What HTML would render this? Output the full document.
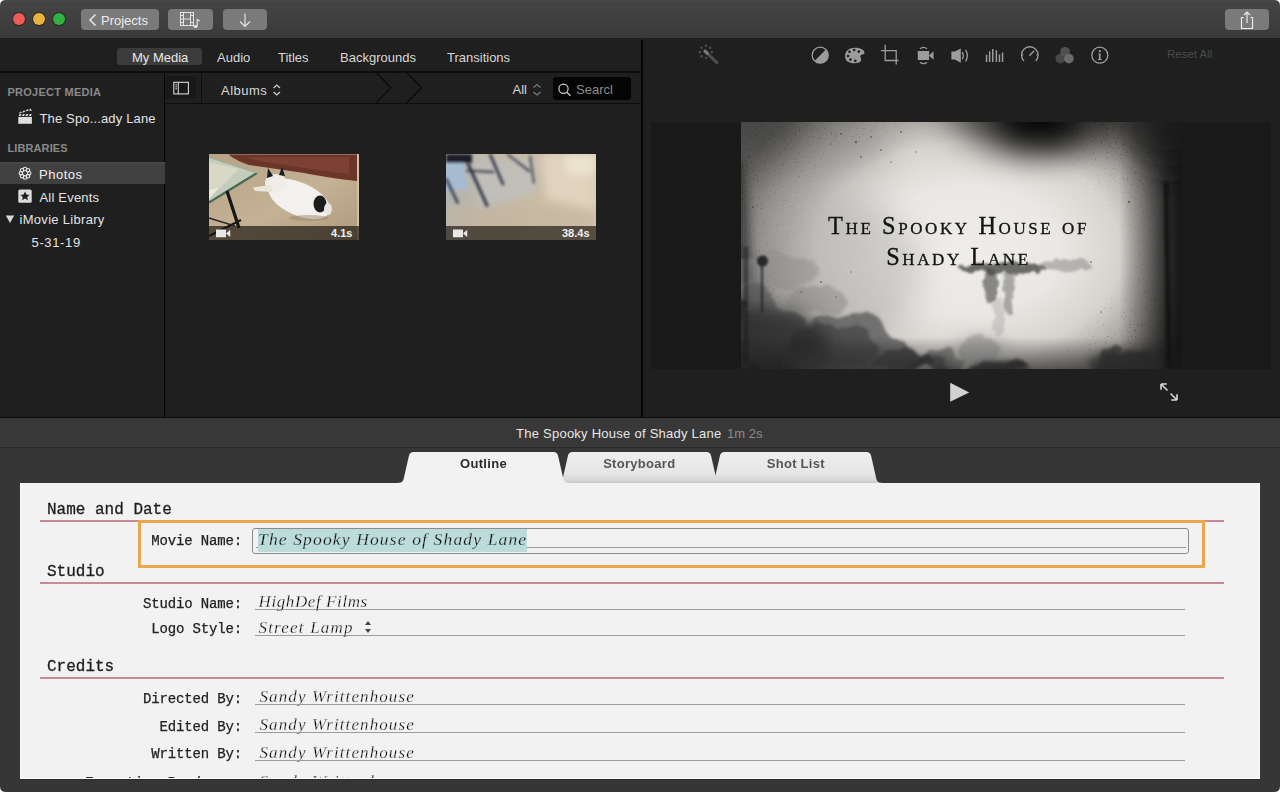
<!DOCTYPE html>
<html><head><meta charset="utf-8"><style>
html,body{margin:0;padding:0;}
body{width:1280px;height:792px;overflow:hidden;position:relative;background:#1f1f1f;font-family:"Liberation Sans", sans-serif;}
.r{position:absolute;}
.t{position:absolute;white-space:nowrap;line-height:1;}
</style></head><body>
<div class="r" style="left:0px;top:0px;width:1280px;height:37.5px;background:linear-gradient(#4a4a4a 0px,#444 3px,#3a3a3a 37px);"></div>
<div class="r" style="left:0px;top:37.5px;width:1280px;height:1px;background:#2a2a2a;"></div>
<div class="r" style="left:12.5px;top:12.5px;width:12px;height:12px;border-radius:50%;background:#ee5b56;box-shadow:0 0 0 0.9px rgba(20,10,10,0.45);"></div>
<div class="r" style="left:32.5px;top:12.5px;width:12px;height:12px;border-radius:50%;background:#e8b33b;box-shadow:0 0 0 0.9px rgba(20,10,10,0.45);"></div>
<div class="r" style="left:52.5px;top:12.5px;width:12px;height:12px;border-radius:50%;background:#2fb143;box-shadow:0 0 0 0.9px rgba(20,10,10,0.45);"></div>
<div class="r" style="left:81px;top:9px;width:78px;height:21px;background:#7a7a7a;border-radius:4px;"></div>
<div class="r" style="left:168px;top:9px;width:45px;height:21px;background:#7a7a7a;border-radius:4px;"></div>
<div class="r" style="left:223px;top:9px;width:44px;height:21px;background:#7a7a7a;border-radius:4px;"></div>
<div class="r" style="left:1225px;top:9px;width:44px;height:21px;background:#7a7a7a;border-radius:4px;"></div>
<svg class="r" style="left:86px;top:12px" width="14" height="16"><path d="M9.5 2.5 L4 8 L9.5 13.5" stroke="#e6e6e6" stroke-width="1.5" fill="none"/></svg>
<div class="t" style="top:13.69px;font-size:13px;font-family:'Liberation Sans', sans-serif;color:#ececec;left:101px;">Projects</div>
<svg class="r" style="left:176px;top:11px" width="32" height="18">
<rect x="4.5" y="1.5" width="13" height="13" fill="none" stroke="#e3e3e3" stroke-width="1"/>
<line x1="7.5" y1="1.5" x2="7.5" y2="14.5" stroke="#e3e3e3"/>
<line x1="14.5" y1="1.5" x2="14.5" y2="14.5" stroke="#e3e3e3"/>
<line x1="7.5" y1="8" x2="14.5" y2="8" stroke="#e3e3e3"/>
<line x1="4.5" y1="4.5" x2="7.5" y2="4.5" stroke="#e3e3e3"/><line x1="4.5" y1="8" x2="7.5" y2="8" stroke="#e3e3e3"/><line x1="4.5" y1="11.5" x2="7.5" y2="11.5" stroke="#e3e3e3"/>
<line x1="14.5" y1="4.5" x2="17.5" y2="4.5" stroke="#e3e3e3"/><line x1="14.5" y1="11.5" x2="17.5" y2="11.5" stroke="#e3e3e3"/>
<ellipse cx="19.5" cy="15.5" rx="2" ry="1.5" fill="#e3e3e3"/>
<path d="M21.2 15.5 V8.5 L24 10" stroke="#e3e3e3" stroke-width="1.2" fill="none"/>
</svg>
<svg class="r" style="left:236px;top:11px" width="18" height="18"><path d="M9 2.5 V15.5 M4 10.5 L9 15.5 L14 10.5" stroke="#e3e3e3" stroke-width="1.2" fill="none"/></svg>
<svg class="r" style="left:1236px;top:10px" width="22" height="20"><path d="M7.5 7.5 H5.5 V18.5 H16.5 V7.5 H14.5" stroke="#ececec" stroke-width="1.2" fill="none"/><path d="M11 2 V13 M8 5 L11 2 L14 5" stroke="#ececec" stroke-width="1.2" fill="none"/></svg>
<div class="r" style="left:0px;top:38px;width:641px;height:379px;background:#1f1f1f;"></div>
<div class="r" style="left:117px;top:48px;width:85px;height:17px;background:#3c3c3c;border-radius:3px;"></div>
<div class="t" style="top:50.59px;font-size:13px;font-family:'Liberation Sans', sans-serif;color:#e8e8e8;left:132px;">My Media</div>
<div class="t" style="top:50.59px;font-size:13px;font-family:'Liberation Sans', sans-serif;color:#d8d8d8;left:217px;">Audio</div>
<div class="t" style="top:50.59px;font-size:13px;font-family:'Liberation Sans', sans-serif;color:#d8d8d8;left:278px;">Titles</div>
<div class="t" style="top:50.59px;font-size:13px;font-family:'Liberation Sans', sans-serif;color:#d8d8d8;left:340px;">Backgrounds</div>
<div class="t" style="top:50.59px;font-size:13px;font-family:'Liberation Sans', sans-serif;color:#d8d8d8;left:447px;">Transitions</div>
<div class="r" style="left:0px;top:71px;width:641px;height:2px;background:#0d0d0d;"></div>
<div class="r" style="left:163.8px;top:73px;width:1.2px;height:344px;background:#050505;"></div>
<div class="t" style="top:86.89px;font-size:11px;font-family:'Liberation Sans', sans-serif;color:#8a8a8a;font-weight:700;letter-spacing:0.25px;left:7.5px;">PROJECT MEDIA</div>
<div class="t" style="top:111.79px;font-size:13px;font-family:'Liberation Sans', sans-serif;color:#e4e4e4;letter-spacing:0.15px;left:39.5px;">The Spo...ady Lane</div>
<div class="t" style="top:143.19px;font-size:11px;font-family:'Liberation Sans', sans-serif;color:#8a8a8a;font-weight:700;letter-spacing:0.1px;left:7.5px;">LIBRARIES</div>
<div class="r" style="left:0px;top:162px;width:165px;height:22px;background:linear-gradient(#4a4a4a 0px,#454545 1.5px,#404040 3px);"></div>
<div class="t" style="top:168.29px;font-size:13px;font-family:'Liberation Sans', sans-serif;color:#f0f0f0;letter-spacing:0.5px;left:39px;">Photos</div>
<div class="t" style="top:190.99px;font-size:13px;font-family:'Liberation Sans', sans-serif;color:#e4e4e4;letter-spacing:0.2px;left:39.5px;">All Events</div>
<div class="t" style="top:213.49px;font-size:13px;font-family:'Liberation Sans', sans-serif;color:#e4e4e4;letter-spacing:0.3px;left:19.5px;">iMovie Library</div>
<div class="t" style="top:235.99px;font-size:13px;font-family:'Liberation Sans', sans-serif;color:#e4e4e4;letter-spacing:0.65px;left:31.5px;">5-31-19</div>
<div class="r" style="left:166px;top:76px;width:30px;height:23px;background:#191919;border-radius:2px;"></div>
<div class="r" style="left:201px;top:73px;width:1px;height:30px;background:#0d0d0d;"></div>
<div class="r" style="left:165px;top:103px;width:476px;height:1px;background:#0d0d0d;"></div>
<div class="t" style="top:84.19px;font-size:13px;font-family:'Liberation Sans', sans-serif;color:#d8d8d8;letter-spacing:0.5px;left:221px;">Albums</div>
<div class="t" style="top:82.99px;font-size:13px;font-family:'Liberation Sans', sans-serif;color:#d8d8d8;left:512.5px;">All</div>
<div class="r" style="left:553px;top:77px;width:78px;height:23px;background:#050505;border-radius:3px;"></div>
<div class="t" style="top:82.99px;font-size:13px;font-family:'Liberation Sans', sans-serif;color:#8a8a8a;left:576px;">Searcl</div>
<svg class="r" style="left:0;top:100px" width="165" height="150">
<g transform="translate(0,-100)">
<path d="M18.3 116.9 H31.9 V123.8 H18.3 Z" fill="#dedede"/>
<g fill="#dcdcdc">
<path d="M18.6 116 L19.6 114 H21.6 L20.6 116 Z"/><path d="M22 116 L23 114 H25 L24 116 Z"/><path d="M25.4 116 L26.4 114 H28.4 L27.4 116 Z"/><path d="M28.8 116 L29.8 114 H31.8 L30.8 116 Z"/>
<path d="M18.6 113.3 L20.4 111.6 L22.2 112.2 L20.2 113.6 Z" opacity="0.85"/><path d="M22 112.2 L23.8 110.5 L25.6 111.1 L23.6 112.5 Z"/><path d="M25.5 111 L27.3 109.3 L29.1 109.9 L27.1 111.3 Z"/><path d="M29 109.9 L30.6 108.6 L31.8 110.4 L30.4 110.9 Z"/>
</g>
<g fill="none" stroke="#e8e8e8" stroke-width="1.1">
<circle cx="29.20" cy="173.20" r="1.75"/><circle cx="27.97" cy="176.17" r="1.75"/><circle cx="25.00" cy="177.40" r="1.75"/><circle cx="22.03" cy="176.17" r="1.75"/><circle cx="20.80" cy="173.20" r="1.75"/><circle cx="22.03" cy="170.23" r="1.75"/><circle cx="25.00" cy="169.00" r="1.75"/><circle cx="27.97" cy="170.23" r="1.75"/>
</g>
<rect x="18.3" y="189.4" width="13.4" height="13.3" rx="1.5" fill="#dcdcdc"/>
<path d="M25 191.6 L26.4 194.6 L29.6 194.9 L27.2 197 L27.9 200.2 L25 198.5 L22.1 200.2 L22.8 197 L20.4 194.9 L23.6 194.6 Z" fill="#1f1f1f"/>
<path d="M5.8 215.5 H14.2 L10 223 Z" fill="#d8d8d8"/>
</g></svg>
<svg class="r" style="left:172px;top:80px" width="20" height="16"><rect x="1.8" y="2.3" width="14.6" height="11.6" fill="none" stroke="#d8d8d8" stroke-width="1.1"/><path d="M6.3 2.3 V13.9" stroke="#d8d8d8" stroke-width="1.1"/><path d="M3.4 4.8 H5 M3.4 6.8 H5 M3.4 8.8 H5" stroke="#d8d8d8" stroke-width="1"/></svg>
<svg class="r" style="left:0;top:0" width="641" height="110">
<path d="M273.6 88 L276.8 85 L280 88 M273.6 92 L276.8 95 L280 92" fill="none" stroke="#d0d0d0" stroke-width="1.2"/>
<path d="M376 72.5 L391 87.8 L376 103" fill="none" stroke="#0b0b0b" stroke-width="1.3"/>
<path d="M406.5 72.5 L421.5 87.8 L406.5 103" fill="none" stroke="#0b0b0b" stroke-width="1.3"/>
<path d="M533.5 87.5 L537 84.5 L540.5 87.5 M533.5 92 L537 95 L540.5 92" fill="none" stroke="#7a7a7a" stroke-width="1.2"/>
<circle cx="563.5" cy="88.8" r="4.6" fill="none" stroke="#cfcfcf" stroke-width="1.2"/>
<path d="M566.8 92.2 L570.5 95.8" stroke="#cfcfcf" stroke-width="1.3"/>
</svg>
<svg class="r" style="left:209px;top:154px" width="150" height="86" viewBox="0 0 150 86">
<defs>
<linearGradient id="cp1" x1="0" y1="0" x2="1" y2="1"><stop offset="0" stop-color="#b6a285"/><stop offset="0.55" stop-color="#c5b193"/><stop offset="1" stop-color="#ad997c"/></linearGradient>
<filter id="tb1" filterUnits="userSpaceOnUse" x="-50" y="-50" width="250" height="186"><feGaussianBlur stdDeviation="0.7"/></filter>
</defs>
<rect width="150" height="86" fill="url(#cp1)"/>
<g filter="url(#tb1)">
<path d="M20 0.5 H148 V27 Q120 24 95 19 L40 11 Q28 7 20 1 Z" fill="#6c342c"/>
<path d="M35 3 H140 V20 Q115 17 95 14 L50 7 Z" fill="#8a4a3e" opacity="0.5"/>
<path d="M148 0 H150 V86 H148 Z" fill="#d0c0a8"/>
<path d="M0 3.4 L48 19 L0 48.5 Z" fill="#c6ccbc"/>
<path d="M0 8 L30 15 L10 35 L0 38 Z" fill="#e2e0cc" opacity="0.6"/>
<path d="M0 36 L10 34 L0 45 Z" fill="#f4f0dc" opacity="0.8"/>
<path d="M48 19 L0 48.5" stroke="#486a55" stroke-width="2.2"/>
<path d="M48 19 L0 3.4" stroke="#9ab0a0" stroke-width="1"/>
<path d="M18 37 L30 74" stroke="#151515" stroke-width="3.2"/>
<path d="M0 64 L26 72" stroke="#2a2a2a" stroke-width="1.6"/>
<path d="M0 82 L32 66" stroke="#1a1a1a" stroke-width="2.2"/>
<ellipse cx="90" cy="45" rx="33" ry="16.5" transform="rotate(24 90 45)" fill="#f3f1ed"/>
<ellipse cx="67" cy="29" rx="11" ry="9" fill="#f0ede8"/>
<path d="M62 31 L44 33.5 L46 37 L64 38 Z" fill="#ebe6dd"/>
<path d="M58 24 L59 14 L64 22 Z M70 21 L73 13 L76 22 Z" fill="#1a1a1a"/>
<ellipse cx="111" cy="50" rx="6.5" ry="8.5" fill="#1c1c1c"/>
<ellipse cx="119" cy="55" rx="4" ry="6" fill="#e8e4de"/>
<ellipse cx="100" cy="64" rx="20" ry="3" fill="#9a8670" opacity="0.5"/>
</g>
<rect y="72" width="150" height="14" fill="#17120c" opacity="0.66"/>
<path d="M7 75.5 H17 V83.3 H7 Z M17 79.4 L21.2 75.8 V83 Z" fill="#e8e8e8"/>
<text x="143.5" y="82.6" text-anchor="end" font-family="Liberation Sans" font-weight="700" font-size="11" fill="#f0f0f0">4.1s</text>
</svg>
<svg class="r" style="left:446px;top:154px" width="150" height="86" viewBox="0 0 150 86">
<defs>
<linearGradient id="cp2" x1="0" y1="0" x2="1" y2="0"><stop offset="0" stop-color="#b4b4b0"/><stop offset="0.45" stop-color="#c6b8a2"/><stop offset="1" stop-color="#d4c4ac"/></linearGradient>
<filter id="tb2" filterUnits="userSpaceOnUse" x="-50" y="-50" width="250" height="186"><feGaussianBlur stdDeviation="1.6"/></filter>
<filter id="tb3" filterUnits="userSpaceOnUse" x="-50" y="-50" width="250" height="186"><feGaussianBlur stdDeviation="4"/></filter>
</defs>
<rect width="150" height="86" fill="url(#cp2)"/>
<g filter="url(#tb3)">
<path d="M95 0 H150 V55 L100 45 Z" fill="#e0d3bd"/>
<path d="M120 0 H150 V20 H120 Z" fill="#ece4d0"/>
<path d="M25 5 H90 V40 L30 55 Z" fill="#bfc0be" opacity="0.8"/>
<path d="M0 55 Q60 48 150 58 V86 H0 Z" fill="#c4b59e" opacity="0.6"/>
</g>
<g filter="url(#tb2)">
<rect x="0" y="0" width="26" height="9" fill="#1a1e2c"/>
<path d="M0 9 H18 L22 35 L0 38 Z" fill="#a6bcd2"/>
</g>
<g filter="url(#tb2)" fill="none">
<path d="M21.5 8.6 L41.5 52.5" stroke="#2a3040" stroke-width="3"/>
<path d="M44 0 L57.4 31" stroke="#2a3040" stroke-width="2.6"/>
<path d="M61.4 0.3 L84 17.6" stroke="#3a4050" stroke-width="2"/>
<path d="M84 1.6 L88 29.5" stroke="#606468" stroke-width="2.6"/>
<path d="M20 16.6 L48 18" stroke="#2a3040" stroke-width="1.8"/>
<path d="M0 24.6 L12 49.4" stroke="#2a3040" stroke-width="2.4"/>
</g>
<rect y="72" width="150" height="14" fill="#17120c" opacity="0.66"/>
<path d="M7 75.5 H17 V83.3 H7 Z M17 79.4 L21.2 75.8 V83 Z" fill="#e8e8e8"/>
<text x="143.5" y="82.6" text-anchor="end" font-family="Liberation Sans" font-weight="700" font-size="11" fill="#f0f0f0">38.4s</text>
</svg>
<div class="r" style="left:641px;top:39.5px;width:1.5px;height:378px;background:#050505;"></div>
<div class="r" style="left:643px;top:38px;width:637px;height:379px;background:#1f1f1f;"></div>
<div class="r" style="left:651px;top:122px;width:620px;height:247px;background:#191919;"></div>
<svg class="r" style="left:741px;top:122px" width="440" height="247" viewBox="0 0 440 247">
<defs>
<radialGradient id="vg" cx="228" cy="128" r="255" gradientUnits="userSpaceOnUse" gradientTransform="translate(228 128) scale(1 0.7) translate(-228 -128)">
<stop offset="0" stop-color="#efede9"/><stop offset="0.35" stop-color="#eae8e4"/><stop offset="0.6" stop-color="#d6d3ce"/><stop offset="0.8" stop-color="#9f9c98"/><stop offset="1" stop-color="#55534f"/>
</radialGradient>
<linearGradient id="rg" x1="378" y1="0" x2="440" y2="0" gradientUnits="userSpaceOnUse"><stop offset="0" stop-color="#151515" stop-opacity="0"/><stop offset="0.4" stop-color="#151515" stop-opacity="0.4"/><stop offset="0.75" stop-color="#121212" stop-opacity="0.8"/><stop offset="1" stop-color="#101010" stop-opacity="0.95"/></linearGradient><linearGradient id="bg2" x1="0" y1="215" x2="0" y2="247" gradientUnits="userSpaceOnUse"><stop offset="0" stop-color="#1a1a1a" stop-opacity="0"/><stop offset="1" stop-color="#1a1a1a" stop-opacity="0.6"/></linearGradient>
<filter id="b16" filterUnits="userSpaceOnUse" x="-200" y="-200" width="840" height="647"><feGaussianBlur stdDeviation="16"/></filter>
<filter id="b8" filterUnits="userSpaceOnUse" x="-200" y="-200" width="840" height="647"><feGaussianBlur stdDeviation="8"/></filter>
<filter id="b4" filterUnits="userSpaceOnUse" x="-200" y="-200" width="840" height="647"><feGaussianBlur stdDeviation="4"/></filter>
<filter id="b3" filterUnits="userSpaceOnUse" x="-200" y="-200" width="840" height="647"><feGaussianBlur stdDeviation="2.5"/></filter>
<filter id="b2" filterUnits="userSpaceOnUse" x="-200" y="-200" width="840" height="647"><feGaussianBlur stdDeviation="1.3"/></filter>
<clipPath id="vc"><rect width="440" height="247"/></clipPath>
<filter id="cld2" filterUnits="userSpaceOnUse" x="-50" y="-50" width="540" height="347"><feTurbulence type="fractalNoise" baseFrequency="0.09" numOctaves="3" seed="5" result="n"/><feDisplacementMap in="SourceGraphic" in2="n" scale="10" xChannelSelector="R" yChannelSelector="G" result="d"/><feGaussianBlur in="d" stdDeviation="1.2"/></filter>
<filter id="cld" filterUnits="userSpaceOnUse" x="-50" y="-50" width="540" height="347"><feTurbulence type="fractalNoise" baseFrequency="0.045" numOctaves="3" seed="11" result="n"/><feDisplacementMap in="SourceGraphic" in2="n" scale="22" xChannelSelector="R" yChannelSelector="G" result="d"/><feGaussianBlur in="d" stdDeviation="1.6"/></filter>
<filter id="sp" filterUnits="userSpaceOnUse" x="0" y="0" width="440" height="247" color-interpolation-filters="sRGB"><feTurbulence type="fractalNoise" baseFrequency="0.5" numOctaves="2" seed="7"/><feColorMatrix type="matrix" values="0 0 0 0 0.2  0 0 0 0 0.2  0 0 0 0 0.2  9 0 0 0 -5.9"/></filter>
<radialGradient id="spm" cx="215" cy="128" r="250" gradientUnits="userSpaceOnUse" gradientTransform="translate(215 128) scale(1 0.7) translate(-215 -128)"><stop offset="0.6" stop-color="#fff" stop-opacity="0"/><stop offset="0.88" stop-color="#fff" stop-opacity="0.55"/><stop offset="1" stop-color="#fff" stop-opacity="1"/></radialGradient>
<mask id="spk" maskUnits="userSpaceOnUse" x="0" y="0" width="440" height="247"><rect width="440" height="247" fill="url(#spm)"/></mask>
</defs>
<g clip-path="url(#vc)">
<rect width="440" height="247" fill="url(#vg)"/>
<ellipse cx="70" cy="150" rx="110" ry="85" fill="#8a8a8a" opacity="0.3" filter="url(#b16)"/>
<ellipse cx="60" cy="25" rx="90" ry="35" fill="#777" opacity="0.3" filter="url(#b16)"/>
<rect width="440" height="247" filter="url(#sp)" mask="url(#spk)" opacity="0.7"/>
<ellipse cx="300" cy="-14" rx="95" ry="48" fill="#000" opacity="0.55" filter="url(#b16)"/><ellipse cx="297" cy="-4" rx="46" ry="28" fill="#000" opacity="0.95" filter="url(#b16)"/><ellipse cx="0" cy="0" rx="60" ry="35" fill="#333" opacity="0.45" filter="url(#b16)"/>
<rect x="340" y="0" width="100" height="247" fill="url(#rg)"/>
<ellipse cx="430" cy="5" rx="50" ry="40" fill="#1a1a1a" opacity="0.7" filter="url(#b16)"/>
<path d="M425 60 L428 247" stroke="#0e0e0e" stroke-width="4.5" opacity="0.75" filter="url(#b2)"/>
<ellipse cx="-4" cy="165" rx="14" ry="130" fill="#1e1e1e" opacity="0.55" filter="url(#b4)"/><ellipse cx="-2" cy="215" rx="22" ry="80" fill="#222" opacity="0.6" filter="url(#b8)"/>
<g filter="url(#cld)">
<path d="M0 158 L20 168 L34 176 L55 195 L69 202 L85 192 L103 188 L120 190 L137 193 L150 207 L163 228 L189 236 L215 247 L0 247 Z" fill="#626262" opacity="0.85"/>
<ellipse cx="35" cy="150" rx="45" ry="18" fill="#8a8a8a" opacity="0.45"/>
<ellipse cx="75" cy="178" rx="30" ry="12" fill="#7a7a7a" opacity="0.4"/>
<ellipse cx="200" cy="240" rx="25" ry="10" fill="#555" opacity="0.6"/>
<ellipse cx="240" cy="228" rx="22" ry="12" fill="#8a8a8a" opacity="0.5"/>
<ellipse cx="90" cy="225" rx="45" ry="20" fill="#3a3a3a" opacity="0.55"/>
<ellipse cx="160" cy="240" rx="30" ry="9" fill="#333" opacity="0.6"/>
<ellipse cx="258" cy="246" rx="28" ry="7" fill="#262626" opacity="0.8"/>
<ellipse cx="385" cy="240" rx="30" ry="10" fill="#2a2a2a" opacity="0.6"/>
</g>
<ellipse cx="15" cy="230" rx="75" ry="45" fill="#262626" opacity="0.75" filter="url(#b8)"/><rect x="0" y="215" width="440" height="32" fill="url(#bg2)"/>
<ellipse cx="110" cy="245" rx="60" ry="18" fill="#3a3a3a" opacity="0.6" filter="url(#b8)"/>
<ellipse cx="240" cy="232" rx="30" ry="16" fill="#888" opacity="0.5" filter="url(#b8)"/>
<ellipse cx="258" cy="248" rx="30" ry="9" fill="#2a2a2a" opacity="0.85" filter="url(#b3)"/>
<ellipse cx="385" cy="242" rx="38" ry="13" fill="#2a2a2a" opacity="0.8" filter="url(#b4)"/>
<circle cx="375" cy="229" r="6" fill="#333" opacity="0.7" filter="url(#b2)"/>
<g filter="url(#cld2)">
<ellipse cx="262" cy="146" rx="45" ry="6" fill="#333" opacity="0.7"/>
<ellipse cx="325" cy="143" rx="28" ry="6" fill="#8a8a8a" opacity="0.55"/>
<ellipse cx="250" cy="165" rx="7" ry="18" fill="#444" opacity="0.6"/>
<ellipse cx="268" cy="172" rx="6" ry="22" fill="#666" opacity="0.5"/>
<ellipse cx="258" cy="195" rx="5" ry="20" fill="#999" opacity="0.35"/>
</g>
<circle cx="21.5" cy="139" r="5.5" fill="#1e1e1e" filter="url(#b2)" opacity="0.9"/>
<path d="M21 143 V190" stroke="#1e1e1e" stroke-width="2" opacity="0.8" filter="url(#b2)"/>
<path d="M5 125 V240" stroke="#1a1a1a" stroke-width="3" opacity="0.6" filter="url(#b2)"/>
<g fill="#333" opacity="0.55">
<circle cx="100" cy="12" r="1"/><circle cx="115" cy="20" r="1.2"/><circle cx="130" cy="15" r="0.9"/><circle cx="90" cy="22" r="0.8"/><circle cx="140" cy="28" r="0.9"/><circle cx="160" cy="10" r="1"/><circle cx="175" cy="30" r="0.8"/><circle cx="8" cy="35" r="1.1"/><circle cx="388" cy="80" r="1.2"/><circle cx="12" cy="85" r="1"/><circle cx="120" cy="35" r="0.9"/><circle cx="150" cy="40" r="0.8"/>
<circle cx="60" cy="170" r="0.8"/><circle cx="80" cy="160" r="0.9"/><circle cx="95" cy="175" r="0.8"/><circle cx="110" cy="150" r="0.7"/><circle cx="350" cy="140" r="0.9"/><circle cx="360" cy="190" r="0.8"/>
</g>
</g>
</svg>
<div class="t" style="left:741px;width:440px;top:209.5px;margin-left:-2.5px;text-align:center;font-family:&quot;Liberation Serif&quot;, serif;font-size:24.3px;line-height:31.1px;font-variant:small-caps;color:#141414;letter-spacing:2.6px;-webkit-text-stroke:0.35px #141414;">The Spooky House of<br>Shady Lane</div>
<div class="t" style="top:49.16px;font-size:11.5px;font-family:'Liberation Sans', sans-serif;color:#4a4a4a;left:1167px;">Reset All</div>
<svg class="r" style="left:0;top:0" width="1280" height="80">
<g fill="#4e4e4e">
<circle cx="706" cy="45.7" r="1.2"/><circle cx="701.5" cy="47.8" r="1.2"/><circle cx="710.2" cy="47.8" r="1.2"/>
<circle cx="699.8" cy="52" r="1.2"/><circle cx="711.8" cy="52" r="1.2"/><circle cx="701.5" cy="56.2" r="1.2"/><circle cx="706" cy="58" r="1.2"/>
</g>
<path d="M705 51.2 L716.8 62.5" stroke="#4e4e4e" stroke-width="3" stroke-linecap="round"/>
<path d="M705 51.2 L707.4 53.4" stroke="#7a7a7a" stroke-width="3" stroke-linecap="round"/>
<circle cx="820.2" cy="55.2" r="8" fill="none" stroke="#9c9c9c" stroke-width="1.3"/>
<path d="M825.9 49.5 A8 8 0 0 1 814.5 60.9 Z" fill="#9c9c9c"/>
<path d="M855 47.8 C861 47.8 865 50.5 864.4 53.3 C864 55 861.5 54 860.6 55.6 C859.5 57.5 862.5 59 860.5 61.5 C858.5 63.8 852 63.6 848.5 62 C845.5 60.5 845 57.5 845.2 55.2 C845.5 50.5 850 47.8 855 47.8 Z" fill="#9c9c9c"/>
<g fill="#1f1f1f"><circle cx="849.5" cy="51.8" r="1.35"/><circle cx="854.2" cy="50" r="1.35"/><circle cx="858.8" cy="51.6" r="1.35"/><circle cx="848" cy="56" r="1.35"/><circle cx="850.5" cy="59.6" r="1.35"/><circle cx="855.3" cy="60.8" r="1.35"/></g>
<path d="M885.2 44.7 V60.5 H898.5 M881 50.6 H896.2 V64.6" fill="none" stroke="#9c9c9c" stroke-width="1.3"/>
<rect x="917.8" y="51" width="11.3" height="9" fill="#9c9c9c"/>
<path d="M929 55.5 L933.5 51.3 V59.7 Z" fill="#9c9c9c"/>
<path d="M920 48.8 Q923.5 45.8 927 48.8 M920 62.2 Q923.5 65.2 927 62.2" fill="none" stroke="#9c9c9c" stroke-width="1.3"/>
<path d="M951.4 51.5 H954.8 L960.8 48.5 V62.8 L954.8 59.5 H951.4 Z" fill="#9c9c9c"/>
<path d="M962.3 52 Q964.2 55.6 962.3 59.2 M965.6 49.8 Q969 55.6 965.6 61.4" fill="none" stroke="#9c9c9c" stroke-width="1.3"/>
<g fill="#9c9c9c"><rect x="985.8" y="54.8" width="1.5" height="7.2"/><rect x="988.9" y="51.3" width="1.5" height="10.7"/><rect x="992" y="49" width="1.5" height="13"/>
<rect x="995.6" y="50.2" width="1.5" height="11.8"/><rect x="998.7" y="54.5" width="1.5" height="7.5"/><rect x="1001.8" y="52.5" width="1.5" height="9.5"/></g>
<path d="M1024 61 A8.3 8.3 0 1 1 1035.6 61" fill="none" stroke="#9c9c9c" stroke-width="1.3"/>
<path d="M1029.8 55.2 L1033.8 51.3" stroke="#9c9c9c" stroke-width="1.5" stroke-linecap="round"/>
<path d="M1021.5 55 H1023.3 M1036.3 55 H1038.1" stroke="#9c9c9c" stroke-width="1.2"/>
<circle cx="1060.3" cy="58.6" r="4.9" fill="#474747"/><circle cx="1065" cy="51.8" r="4.9" fill="#505050"/><circle cx="1068.9" cy="58.6" r="4.9" fill="#6a6a6a"/>
<circle cx="1099.8" cy="55.2" r="8" fill="none" stroke="#9c9c9c" stroke-width="1.3"/>
<circle cx="1099.8" cy="51.2" r="1.1" fill="#9c9c9c"/>
<path d="M1098.2 53.6 H1100.6 V59 H1101.6 V60 H1097.9 V59 H1098.9 V54.6 H1098.2 Z" fill="#9c9c9c"/>
</svg>
<svg class="r" style="left:940px;top:375px" width="250" height="35"><path d="M10.2 7.8 L29.2 17.4 L10.2 26.8 Z" fill="#d2d2d2"/><path d="M221.5 9.5 L227.5 15.5 M221 9 H226.8 M221 9 V14.8 M230.5 18.5 L236.5 24.5 M237 25 H231.2 M237 25 V19.2" stroke="#d8d8d8" stroke-width="1.6" fill="none"/></svg>
<div class="r" style="left:0px;top:417px;width:1280px;height:1px;background:#0a0a0a;"></div>
<div class="r" style="left:0px;top:418px;width:1280px;height:29px;background:#383838;"></div>
<div class="r" style="left:0px;top:447px;width:1280px;height:1px;background:#2a2a2a;"></div>
<div class="r" style="left:0px;top:448px;width:1280px;height:344px;background:#363636;"></div>
<div class="t" style="top:426.99px;font-size:13px;font-family:'Liberation Sans', sans-serif;color:#e6e6e6;letter-spacing:0.25px;left:516px;">The Spooky House of Shady Lane</div>
<div class="t" style="top:426.99px;font-size:13px;font-family:'Liberation Sans', sans-serif;color:#8c8c8c;left:727px;">1m 2s</div>
<div class="r" style="left:20px;top:483px;width:1240px;height:296px;background:#f2f2f2;"></div>
<svg class="r" style="left:0;top:0" width="1280" height="792">
<defs><linearGradient id="tg" x1="0" y1="452" x2="0" y2="483" gradientUnits="userSpaceOnUse">
<stop offset="0" stop-color="#eeeeee"/><stop offset="0.7" stop-color="#e6e6e6"/><stop offset="0.9" stop-color="#d8d8d8"/><stop offset="1" stop-color="#c9c9c9"/></linearGradient></defs>
<path d="M708 483 Q713.5 483 714.5 479.5 L720 455.5 Q720.8 452 724.5 452 L866.5 452 Q870.2 452 871 455.5 L876.5 479.5 Q877.5 483 883 483 Z" fill="url(#tg)"/>
<path d="M556 483 Q561.5 483 562.5 479.5 L568 455.5 Q568.8 452 572.5 452 L706.5 452 Q710.2 452 711 455.5 L716.5 479.5 Q717.5 483 723 483 Z" fill="url(#tg)"/>
<path d="M397 483 Q402.5 483 403.5 479.5 L409 455.5 Q409.8 452 413.5 452 L553.5 452 Q557.2 452 558 455.5 L563.5 479.5 Q564.5 483 570 483 Z" fill="#f2f2f2"/>
</svg>
<div class="t" style="top:456.99px;font-size:13px;font-family:'Liberation Sans', sans-serif;color:#2b2b2b;font-weight:700;letter-spacing:0.3px;left:183.5px;width:600px;text-align:center;">Outline</div>
<div class="t" style="top:456.99px;font-size:13px;font-family:'Liberation Sans', sans-serif;color:#565656;font-weight:700;letter-spacing:0.3px;left:339.29999999999995px;width:600px;text-align:center;">Storyboard</div>
<div class="t" style="top:456.99px;font-size:13px;font-family:'Liberation Sans', sans-serif;color:#565656;font-weight:700;letter-spacing:0.25px;left:495.79999999999995px;width:600px;text-align:center;">Shot List</div>
<div class="r" style="left:40px;top:520px;width:1184px;height:2px;background:#c98b93;"></div>
<div class="r" style="left:40px;top:582px;width:1184px;height:2px;background:#c98b93;"></div>
<div class="r" style="left:40px;top:677px;width:1184px;height:2px;background:#c98b93;"></div>
<div class="t" style="top:501.74px;font-size:16px;font-family:'Liberation Mono', monospace;color:#1e1e1e;left:47px;-webkit-text-stroke:0.3px #1e1e1e;">Name and Date</div>
<div class="t" style="top:564.04px;font-size:16px;font-family:'Liberation Mono', monospace;color:#1e1e1e;left:47px;-webkit-text-stroke:0.3px #1e1e1e;">Studio</div>
<div class="t" style="top:658.74px;font-size:16px;font-family:'Liberation Mono', monospace;color:#1e1e1e;left:47px;-webkit-text-stroke:0.3px #1e1e1e;">Credits</div>
<div class="r" style="left:137.5px;top:520px;width:1067.5px;height:48px;box-sizing:border-box;border:3px solid #eaa74b;"></div>
<div class="r" style="left:251.5px;top:528px;width:937.5px;height:25.5px;box-sizing:border-box;border:1px solid #8c8c8c;border-radius:3px;background:#f2f2f2;"></div>
<div class="r" style="left:256px;top:547px;width:930px;height:1px;background:#9a9a9a;"></div>
<div class="r" style="left:258px;top:529px;width:269px;height:22.5px;background:#bcdcdc;"></div>
<div class="t" style="top:531.38px;font-size:17.5px;font-family:'Liberation Sans', sans-serif;color:#000;letter-spacing:1.15px;left:258px;font-style:italic;font-family:&quot;Liberation Serif&quot;, serif;-webkit-text-stroke:0.3px #bcdcdc;">The Spooky House of Shady Lane</div>
<div class="t" style="top:534.47px;font-size:14px;font-family:'Liberation Mono', monospace;color:#222;letter-spacing:-0.15px;right:1038px;-webkit-text-stroke:0.25px #222;">Movie Name:</div>
<div class="t" style="top:596.57px;font-size:14px;font-family:'Liberation Mono', monospace;color:#222;letter-spacing:-0.15px;right:1038px;-webkit-text-stroke:0.25px #222;">Studio Name:</div>
<div class="t" style="top:622.27px;font-size:14px;font-family:'Liberation Mono', monospace;color:#222;letter-spacing:-0.15px;right:1038px;-webkit-text-stroke:0.25px #222;">Logo Style:</div>
<div class="t" style="top:691.77px;font-size:14px;font-family:'Liberation Mono', monospace;color:#222;letter-spacing:-0.15px;right:1038px;-webkit-text-stroke:0.25px #222;">Directed By:</div>
<div class="t" style="top:719.57px;font-size:14px;font-family:'Liberation Mono', monospace;color:#222;letter-spacing:-0.15px;right:1038px;-webkit-text-stroke:0.25px #222;">Edited By:</div>
<div class="t" style="top:747.07px;font-size:14px;font-family:'Liberation Mono', monospace;color:#222;letter-spacing:-0.15px;right:1038px;-webkit-text-stroke:0.25px #222;">Written By:</div>
<div class="t" style="top:776.27px;font-size:14px;font-family:'Liberation Mono', monospace;color:#222;letter-spacing:-0.15px;right:1038px;-webkit-text-stroke:0.25px #222;">Executive Producer:</div>
<div class="r" style="left:255px;top:608.5px;width:930px;height:1.2px;background:#9c9c9c;"></div>
<div class="r" style="left:255px;top:634.5px;width:930px;height:1.2px;background:#9c9c9c;"></div>
<div class="r" style="left:255px;top:703.8px;width:930px;height:1.2px;background:#9c9c9c;"></div>
<div class="r" style="left:255px;top:732px;width:930px;height:1.2px;background:#9c9c9c;"></div>
<div class="r" style="left:255px;top:759.5px;width:930px;height:1.2px;background:#9c9c9c;"></div>
<div class="t" style="top:593.11px;font-size:17px;font-family:'Liberation Sans', sans-serif;color:#000;letter-spacing:0.6px;left:258.5px;font-style:italic;font-family:&quot;Liberation Serif&quot;, serif;-webkit-text-stroke:0.3px #f2f2f2;">HighDef Films</div>
<div class="t" style="top:618.61px;font-size:17px;font-family:'Liberation Sans', sans-serif;color:#000;letter-spacing:1.2px;left:258.5px;font-style:italic;font-family:&quot;Liberation Serif&quot;, serif;-webkit-text-stroke:0.3px #f2f2f2;">Street Lamp</div>
<svg class="r" style="left:362px;top:619px" width="12" height="16"><path d="M3 6 L6 2 L9 6 Z M3 10 L6 14 L9 10 Z" fill="#444"/></svg>
<div class="t" style="top:688.41px;font-size:17px;font-family:'Liberation Sans', sans-serif;color:#000;letter-spacing:1.1px;left:259.5px;font-style:italic;font-family:&quot;Liberation Serif&quot;, serif;-webkit-text-stroke:0.3px #f2f2f2;">Sandy Writtenhouse</div>
<div class="t" style="top:716.21px;font-size:17px;font-family:'Liberation Sans', sans-serif;color:#000;letter-spacing:1.1px;left:259.5px;font-style:italic;font-family:&quot;Liberation Serif&quot;, serif;-webkit-text-stroke:0.3px #f2f2f2;">Sandy Writtenhouse</div>
<div class="t" style="top:743.71px;font-size:17px;font-family:'Liberation Sans', sans-serif;color:#000;letter-spacing:1.1px;left:259.5px;font-style:italic;font-family:&quot;Liberation Serif&quot;, serif;-webkit-text-stroke:0.3px #f2f2f2;">Sandy Writtenhouse</div>
<div class="t" style="top:772.91px;font-size:17px;font-family:'Liberation Sans', sans-serif;color:#000;letter-spacing:1.1px;left:259.5px;font-style:italic;font-family:&quot;Liberation Serif&quot;, serif;-webkit-text-stroke:0.3px #f2f2f2;">Sandy Writtenhouse</div>
<div class="r" style="left:0px;top:778.8px;width:1280px;height:13.2px;background:#363636;"></div>
<div class="r" style="left:1259px;top:483px;width:1px;height:295px;background:#fbfbfb;"></div>
<div class="r" style="left:20px;top:777.8px;width:1240px;height:1px;background:#fbfbfb;"></div>
<div class="r" style="left:20px;top:778.8px;width:1241px;height:1.5px;background:#2c2c2c;"></div>
<div class="r" style="left:20px;top:483px;width:1px;height:295px;background:#fafafa;"></div>
<div class="r" style="left:0px;top:0px;width:5px;height:5px;background:radial-gradient(circle at 5px 5px, rgba(255,255,255,0) 4.3px, #fff 5.5px);"></div>
<div class="r" style="left:1275px;top:0px;width:5px;height:5px;background:radial-gradient(circle at 0px 5px, rgba(255,255,255,0) 4.3px, #fff 5.5px);"></div>
<div class="r" style="left:0px;top:787px;width:5px;height:5px;background:radial-gradient(circle at 5px 0px, rgba(255,255,255,0) 4.3px, #fff 5.5px);"></div>
<div class="r" style="left:1275px;top:787px;width:5px;height:5px;background:radial-gradient(circle at 0px 0px, rgba(255,255,255,0) 4.3px, #fff 5.5px);"></div>
</body></html>
